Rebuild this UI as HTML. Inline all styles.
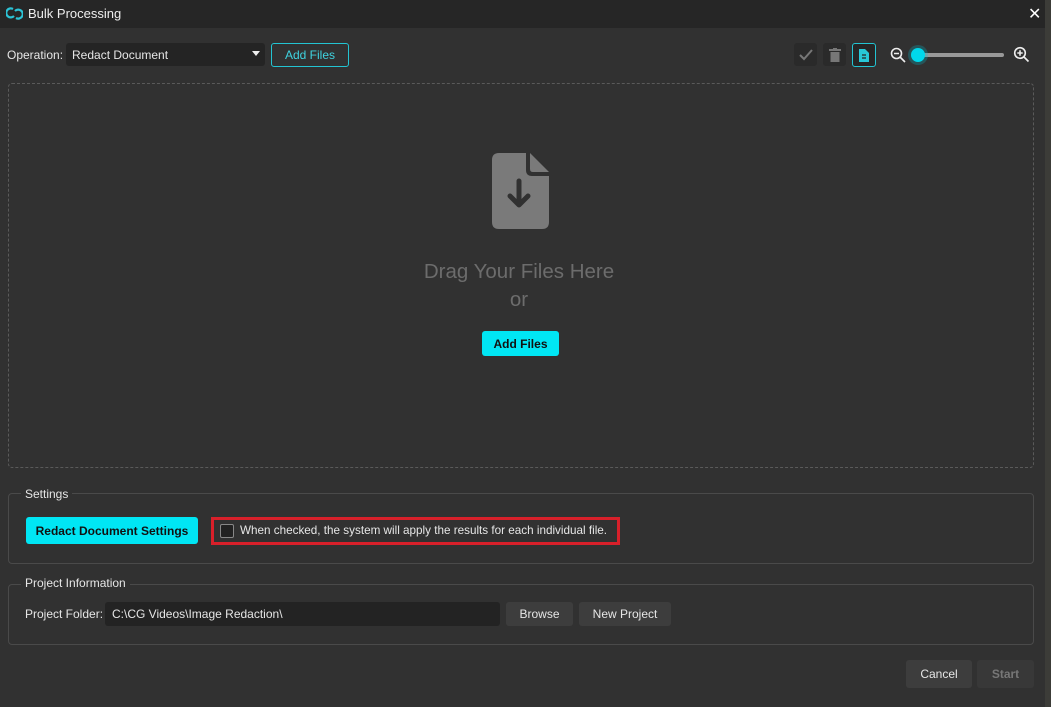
<!DOCTYPE html><html><head><style>
*{box-sizing:border-box;margin:0;padding:0}
body{width:1051px;height:707px;background:#313131;font-family:"Liberation Sans",sans-serif;color:#e6e6e6;position:relative;overflow:hidden;font-size:12px}
.a{position:absolute}
.t{display:flex;align-items:center}
.btn{position:absolute;display:flex;align-items:center;justify-content:center;border-radius:3px;font-size:12px}
fieldset{position:absolute;border:1px solid #4a4a4a;border-radius:4px}
</style></head><body>
<div class="a" style="left:0;top:0;width:1045px;height:28px;background:#262626"></div>
<div class="a" style="left:1045px;top:0;width:6px;height:707px;background:#3c3c38"></div>
<svg class="a" style="left:6px;top:6px" width="17" height="15" viewBox="0 0 17 15"><path d="M7 3 A4.5 4.5 0 1 0 8 10" stroke="#2cc3d6" stroke-width="2.2" fill="none"/><path d="M10 12 A4.5 4.5 0 1 0 9 5" stroke="#2cc3d6" stroke-width="2.2" fill="none"/></svg>
<div class="a" style="left:28px;top:6px;font-size:13px;color:#eee">Bulk Processing</div>
<div class="a" style="left:1028px;top:4px;font-size:16px;color:#fff">✕</div>
<div class="a" style="left:7px;top:48px;font-size:12px">Operation:</div>
<div class="a t" style="left:66px;top:43px;width:199px;height:23px;background:#242424;border-radius:3px;padding-left:6px;font-size:12px">Redact Document<span style="position:absolute;right:5px;top:8px;border:4px solid transparent;border-top:5px solid #eee;border-bottom:0"></span></div>
<div class="btn" style="left:271px;top:43px;width:78px;height:24px;border:1px solid #23c4d2;color:#3fd3e0">Add Files</div>
<div class="btn" style="left:794px;top:43px;width:23px;height:23px;background:#2a2a2a"><svg width="14" height="12"><path d="M1 6 L5 10 L13 1" stroke="#777" stroke-width="2" fill="none"/></svg></div>
<div class="btn" style="left:823px;top:43px;width:23px;height:23px;background:#2a2a2a"><svg width="12" height="14"><rect x="0" y="1" width="12" height="2" fill="#777"/><rect x="4" y="0" width="4" height="2" fill="#777"/><rect x="1.5" y="4" width="9" height="10" fill="#777"/></svg></div>
<div class="btn" style="left:852px;top:43px;width:24px;height:24px;border:1px solid #23c4d2;background:#262626"><svg width="10" height="13"><path d="M0 0H6L10 4V13H0Z" fill="#28c8d8"/><path d="M3 6H7M3 9H7" stroke="#262626" stroke-width="1.2"/></svg></div>
<svg class="a" style="left:890px;top:47px" width="16" height="16"><circle cx="6.5" cy="6.5" r="5" stroke="#eee" stroke-width="1.6" fill="none"/><path d="M4 6.5H9M10 10L15 15" stroke="#eee" stroke-width="1.6"/></svg>
<div class="a" style="left:918px;top:53px;width:86px;height:4px;background:#999;border-radius:2px"></div>
<div class="a" style="left:911px;top:48px;width:14px;height:14px;border-radius:50%;background:#00d8ec;box-shadow:0 0 0 3px rgba(0,200,220,.25)"></div>
<svg class="a" style="left:1013px;top:46px" width="17" height="17"><circle cx="7" cy="7" r="5.3" stroke="#eee" stroke-width="1.6" fill="none"/><path d="M4.3 7H9.7M7 4.3V9.7M10.5 10.5L15.5 15.5" stroke="#eee" stroke-width="1.6"/></svg>
<div class="a" style="left:8px;top:83px;width:1026px;height:385px;border:1px dashed #5a5a5a;border-radius:4px"></div>
<svg class="a" style="left:492px;top:153px" width="57" height="76" viewBox="0 0 57 76"><path d="M7 0H34V17Q34 23 40 23H57V69Q57 76 50 76H7Q0 76 0 69V7Q0 0 7 0Z" fill="#7a7a7a"/><path d="M38 0L57 19H41Q38 19 38 16Z" fill="#7a7a7a"/><path d="M27 28V52M18 43L27 52L36 43" stroke="#313131" stroke-width="5" fill="none" stroke-linecap="round" stroke-linejoin="round"/></svg>
<div class="a" style="left:319px;top:258px;width:400px;text-align:center;font-size:20.5px;color:#6c6c6c;line-height:28px">Drag Your Files Here<br>or</div>
<div class="btn" style="left:482px;top:331px;width:77px;height:25px;background:#00e6f4;color:#111;font-weight:bold">Add Files</div>
<fieldset style="left:8px;top:493px;width:1026px;height:71px"></fieldset>
<div class="a" style="left:21px;top:487px;background:#313131;padding:0 4px;font-size:12px">Settings</div>
<div class="btn" style="left:26px;top:517px;width:172px;height:27px;background:#00e6f4;color:#111;font-weight:bold">Redact Document Settings</div>
<div class="a" style="left:211px;top:517px;width:409px;height:28px;border:3px solid #d8202a"></div>
<div class="a" style="left:220px;top:524px;width:14px;height:14px;border:1px solid #888;background:#222;border-radius:2px"></div>
<div class="a" style="left:240px;top:524px;font-size:11.7px">When checked, the system will apply the results for each individual file.</div>
<fieldset style="left:8px;top:584px;width:1026px;height:61px"></fieldset>
<div class="a" style="left:21px;top:576px;background:#313131;padding:0 4px;font-size:12px">Project Information</div>
<div class="a" style="left:25px;top:607px">Project Folder:</div>
<div class="a t" style="left:105px;top:602px;width:395px;height:24px;background:#232323;border-radius:3px;padding-left:7px">C:\CG Videos\Image Redaction\</div>
<div class="btn" style="left:506px;top:602px;width:67px;height:24px;background:#3d3d3d">Browse</div>
<div class="btn" style="left:579px;top:602px;width:92px;height:24px;background:#3d3d3d">New Project</div>
<div class="btn" style="left:906px;top:660px;width:66px;height:28px;background:#3d3d3d">Cancel</div>
<div class="btn" style="left:977px;top:660px;width:57px;height:28px;background:#383838;color:#777;font-weight:bold">Start</div>
</body></html>
